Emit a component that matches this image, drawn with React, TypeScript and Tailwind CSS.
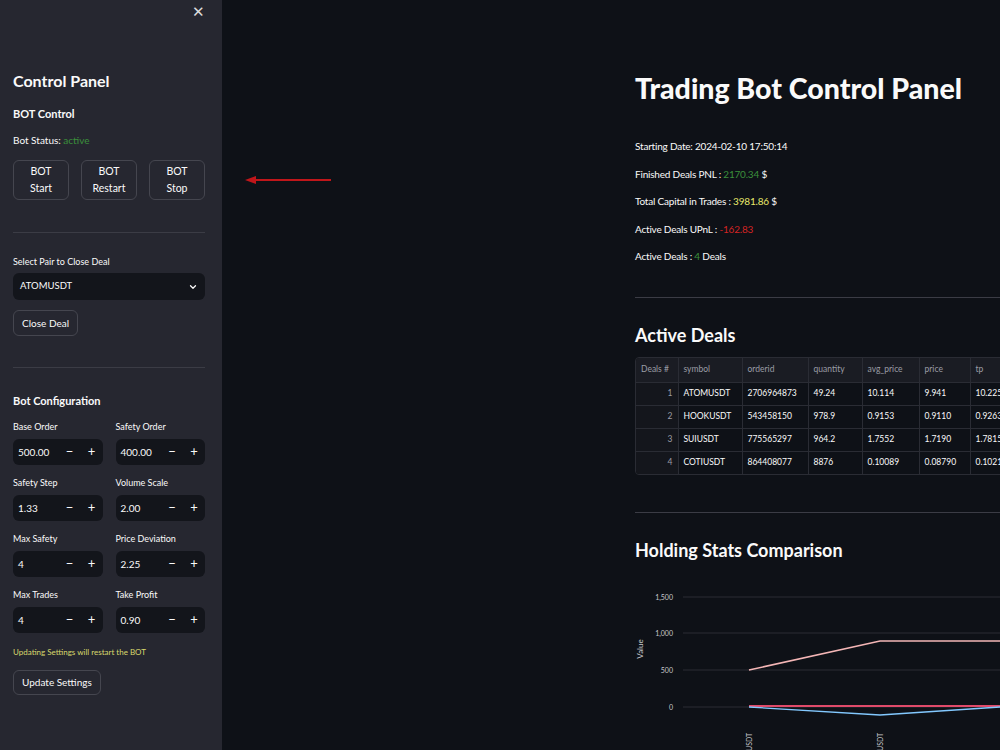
import React from 'react';

const font = { fontFamily: 'Lato, "Noto Sans", sans-serif' };

const NumberInput: React.FC<{ label: string; value: string }> = ({ label, value }) => (
  <div className="flex flex-col">
    <div className="text-[9px] text-[#fafafa] h-[12px] leading-[12px] mb-[6px]">{label}</div>
    <div className="h-[26px] rounded-[6px] bg-[#13151b] flex items-center text-[10px] text-[#fafafa]">
      <span className="flex-1 pl-[5px]">{value}</span>
      <span className="w-[22px] text-center text-[13px]">−</span>
      <span className="w-[22px] text-center text-[13px]">+</span>
    </div>
  </div>
);

const Divider: React.FC<{ className?: string }> = ({ className }) => (
  <div className={`h-px bg-[#3b3c45] ${className ?? ''}`} />
);

const deals = [
  ['1', 'ATOMUSDT', '2706964873', '49.24', '10.114', '9.941', '10.225'],
  ['2', 'HOOKUSDT', '543458150', '978.9', '0.9153', '0.9110', '0.9263'],
  ['3', 'SUIUSDT', '775565297', '964.2', '1.7552', '1.7190', '1.7815'],
  ['4', 'COTIUSDT', '864408077', '8876', '0.10089', '0.08790', '0.1021'],
];

const cols = ['Deals #', 'symbol', 'orderid', 'quantity', 'avg_price', 'price', 'tp'];
const widths = ['w-[42px]', 'w-[64px]', 'w-[66px]', 'w-[54px]', 'w-[57px]', 'w-[51px]', 'w-[64px]'];

export default function App() {
  return (
    <div className="w-[1000px] h-[750px] overflow-hidden flex bg-[#0e1117] text-[#fafafa]" style={font}>
      {/* Sidebar */}
      <aside className="w-[222px] shrink-0 bg-[#262730] flex flex-col pl-[13px] pr-[17px]">
        <div className="flex justify-end pt-[4px] h-[64px]">
          <span className="text-[15px] leading-[15px] text-[#dcdcdc]">✕</span>
        </div>
        <h2 className="text-[16px] font-bold leading-[22px] mt-[6px]">Control Panel</h2>
        <h3 className="text-[11px] font-bold leading-[16px] mt-[14px]">BOT Control</h3>
        <div className="text-[10px] leading-[14px] mt-[11px]">
          Bot Status: <span className="text-[#3b8f3b]">active</span>
        </div>
        <div className="flex gap-[12px] mt-[13px]">
          {['Start', 'Restart', 'Stop'].map((s) => (
            <div
              key={s}
              className="w-[56px] h-[40px] rounded-[6px] border border-[#45464f] flex flex-col items-center justify-center text-[10.5px] leading-[17px]"
            >
              <span>BOT</span>
              <span>{s}</span>
            </div>
          ))}
        </div>
        <Divider className="mt-[32px]" />
        <div className="text-[9px] leading-[12px] mt-[23px]">Select Pair to Close Deal</div>
        <div className="h-[27px] mt-[5px] rounded-[6px] bg-[#13151b] flex items-center justify-between px-[7px] text-[9.5px]">
          <span>ATOMUSDT</span>
          <svg width="10" height="10" viewBox="0 0 24 24" fill="none" stroke="#fafafa" strokeWidth="3" strokeLinecap="round" strokeLinejoin="round">
            <path d="M6 9l6 6 6-6" />
          </svg>
        </div>
        <div className="mt-[10px] self-start h-[26px] px-[8px] rounded-[6px] border border-[#45464f] flex items-center text-[10px]">
          Close Deal
        </div>
        <Divider className="mt-[31px]" />
        <h3 className="text-[11px] font-bold leading-[16px] mt-[25px]">Bot Configuration</h3>
        <div className="grid grid-cols-2 gap-x-[13px] gap-y-[12px] mt-[12px]">
          <NumberInput label="Base Order" value="500.00" />
          <NumberInput label="Safety Order" value="400.00" />
          <NumberInput label="Safety Step" value="1.33" />
          <NumberInput label="Volume Scale" value="2.00" />
          <NumberInput label="Max Safety" value="4" />
          <NumberInput label="Price Deviation" value="2.25" />
          <NumberInput label="Max Trades" value="4" />
          <NumberInput label="Take Profit" value="0.90" />
        </div>
        <div className="text-[8px] leading-[12px] mt-[13px] text-[#d8d86c]">Updating Settings will restart the BOT</div>
        <div className="mt-[12px] self-start h-[25px] px-[8px] rounded-[6px] border border-[#45464f] flex items-center text-[10px]">
          Update Settings
        </div>
      </aside>

      {/* Main */}
      <main className="flex-1 relative overflow-hidden">
        <svg className="absolute left-[21px] top-[174px]" width="92" height="12" viewBox="0 0 92 12">
          <line x1="10" y1="6" x2="88" y2="6" stroke="#c0161a" strokeWidth="2" />
          <path d="M2 6 L13 2 L13 10 Z" fill="#c0161a" />
        </svg>
        <div className="pl-[413px] w-[1200px]">
          <h1 className="text-[28.5px] font-black leading-[34px] mt-[71px]">Trading Bot Control Panel</h1>
          <div className="mt-[34px] flex flex-col gap-[13.5px] text-[10px] leading-[14px] tracking-[-0.2px]">
            <div>Starting Date: 2024-02-10 17:50:14</div>
            <div>
              Finished Deals PNL : <span className="text-[#3b8f3b]">2170.34</span> $
            </div>
            <div>
              Total Capital in Trades : <span className="text-[#e8e86a]">3981.86</span> $
            </div>
            <div>
              Active Deals UPnL : <span className="text-[#d42424]">-162.83</span>
            </div>
            <div>
              Active Deals : <span className="text-[#3b8f3b]">4</span> Deals
            </div>
          </div>
          <Divider className="mt-[34px] w-[700px]" />
          <h2 className="text-[18px] font-bold leading-[22px] mt-[26px]">Active Deals</h2>
          <div className="mt-[11px] w-[420px] rounded-[4px] border border-[#2a2c34] overflow-hidden">
            <table className="border-collapse text-[8.5px] table-fixed whitespace-nowrap">
              <thead>
                <tr className="bg-[#1a1c23] text-[#9a9ca5] h-[24px]">
                  {cols.map((c, i) => (
                    <th key={c} className={`${widths[i]} font-normal text-left px-[5px] border-r border-[#2a2c34]`}>
                      {c}
                    </th>
                  ))}
                </tr>
              </thead>
              <tbody>
                {deals.map((r) => (
                  <tr key={r[0]} className="h-[23px] border-t border-[#2a2c34]">
                    {r.map((v, i) => (
                      <td
                        key={i}
                        className={`${widths[i]} px-[5px] border-r border-[#2a2c34] ${
                          i === 0 ? 'text-right text-[#9a9ca5] bg-[#14161c]' : 'text-left'
                        }`}
                      >
                        {v}
                      </td>
                    ))}
                  </tr>
                ))}
              </tbody>
            </table>
          </div>
          <Divider className="mt-[37px] w-[700px]" />
          <h2 className="text-[18px] font-bold leading-[22px] mt-[26px]">Holding Stats Comparison</h2>
          <svg width="400" height="200" viewBox="0 0 400 200">
            {[
              ['1,500', 36],
              ['1,000', 72],
              ['500', 109],
              ['0', 146],
            ].map(([l, y]) => (
              <g key={l as string}>
                <line x1="48" x2="400" y1={y as number} y2={y as number} stroke="#2b2d35" strokeWidth="1" />
                <text x="38" y={(y as number) + 2.5} textAnchor="end" fontSize="7" fill="#c8c8cc">
                  {l}
                </text>
              </g>
            ))}
            <text x="0" y="0" fontSize="8" fill="#c8c8cc" transform="translate(8 88) rotate(-90)" textAnchor="middle">
              Value
            </text>
            <polyline points="114,109 245,80 400,80" fill="none" stroke="#f4b6b6" strokeWidth="1.5" />
            <polyline points="114,145 400,145" fill="none" stroke="#e04a6a" strokeWidth="2" />
            <polyline points="114,146 245,154 365,146 400,146" fill="none" stroke="#83c9ff" strokeWidth="1.3" />
            <text fontSize="7" fill="#c8c8cc" transform="translate(117 190) rotate(-90)">USDT</text>
            <text fontSize="7" fill="#c8c8cc" transform="translate(248 190) rotate(-90)">USDT</text>
          </svg>
        </div>
      </main>
    </div>
  );
}
